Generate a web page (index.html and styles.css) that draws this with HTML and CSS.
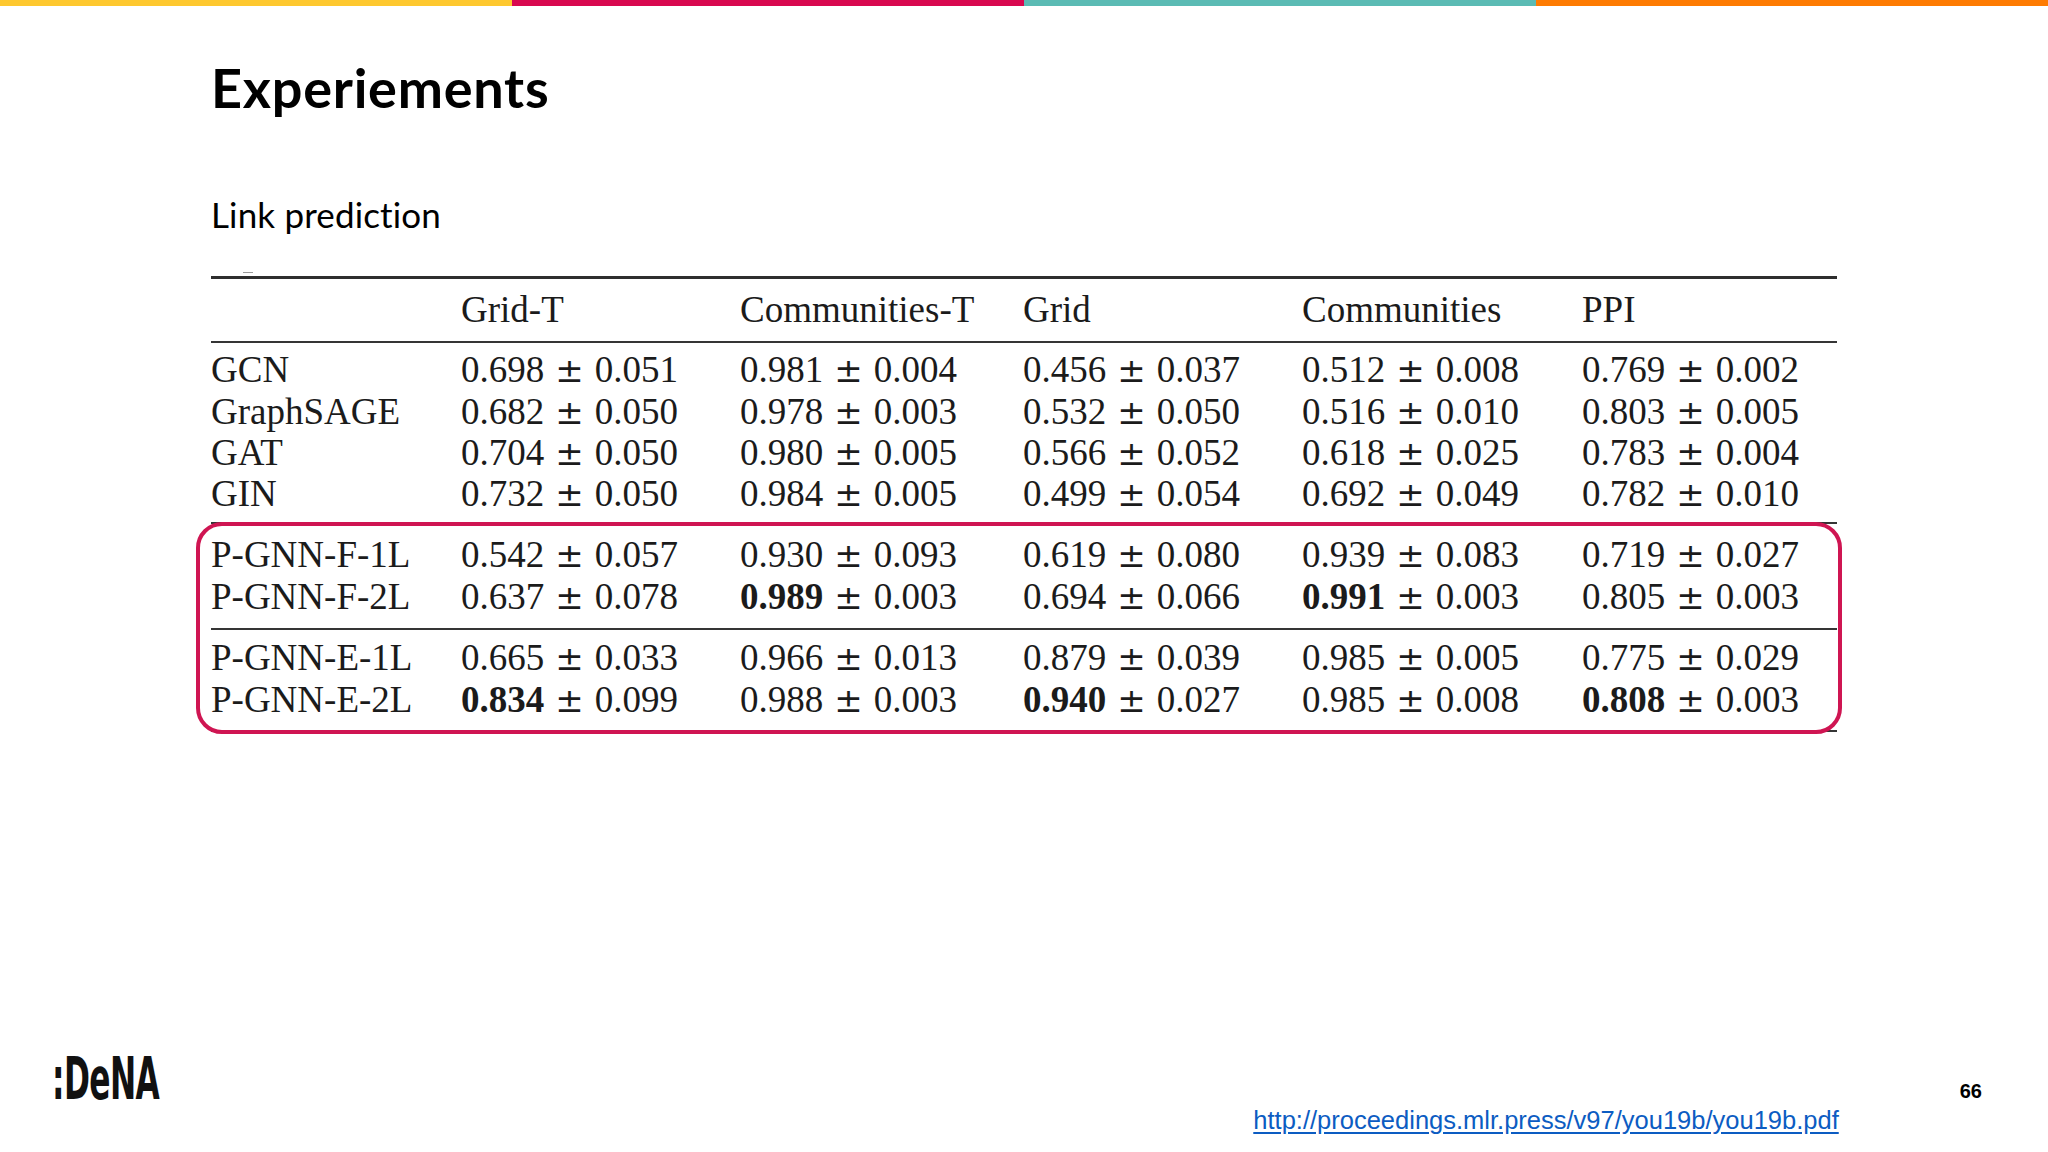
FILE: index.html
```html
<!DOCTYPE html>
<html lang="en">
<head>
<meta charset="utf-8">
<title>Experiements</title>
<link rel="stylesheet" href="styles.css">
</head>
<body>
<div class="slide">
  <div class="topbar">
    <div class="seg yellow"></div>
    <div class="seg crimson"></div>
    <div class="seg teal"></div>
    <div class="seg orange"></div>
  </div>

  <main class="content">
    <h1 class="title">Experiements</h1>
    <p class="subtitle">Link prediction</p>

    <div class="results">
      <div class="rule thick"></div>
      <div class="row head">
        <span></span><span>Grid-T</span><span>Communities-T</span><span>Grid</span><span>Communities</span><span>PPI</span>
      </div>
      <div class="rule"></div>
      <div class="group g1">
        <div class="row"><span class="lbl">GCN</span><span>0.698<i>±</i>0.051</span><span>0.981<i>±</i>0.004</span><span>0.456<i>±</i>0.037</span><span>0.512<i>±</i>0.008</span><span>0.769<i>±</i>0.002</span></div>
        <div class="row"><span class="lbl">GraphSAGE</span><span>0.682<i>±</i>0.050</span><span>0.978<i>±</i>0.003</span><span>0.532<i>±</i>0.050</span><span>0.516<i>±</i>0.010</span><span>0.803<i>±</i>0.005</span></div>
        <div class="row"><span class="lbl">GAT</span><span>0.704<i>±</i>0.050</span><span>0.980<i>±</i>0.005</span><span>0.566<i>±</i>0.052</span><span>0.618<i>±</i>0.025</span><span>0.783<i>±</i>0.004</span></div>
        <div class="row"><span class="lbl">GIN</span><span>0.732<i>±</i>0.050</span><span>0.984<i>±</i>0.005</span><span>0.499<i>±</i>0.054</span><span>0.692<i>±</i>0.049</span><span>0.782<i>±</i>0.010</span></div>
      </div>
      <div class="rule"></div>
      <div class="group g2">
        <div class="row"><span class="lbl">P-GNN-F-1L</span><span>0.542<i>±</i>0.057</span><span>0.930<i>±</i>0.093</span><span>0.619<i>±</i>0.080</span><span>0.939<i>±</i>0.083</span><span>0.719<i>±</i>0.027</span></div>
        <div class="row"><span class="lbl">P-GNN-F-2L</span><span>0.637<i>±</i>0.078</span><span><b>0.989</b><i>±</i>0.003</span><span>0.694<i>±</i>0.066</span><span><b>0.991</b><i>±</i>0.003</span><span>0.805<i>±</i>0.003</span></div>
      </div>
      <div class="rule"></div>
      <div class="group g3">
        <div class="row"><span class="lbl">P-GNN-E-1L</span><span>0.665<i>±</i>0.033</span><span>0.966<i>±</i>0.013</span><span>0.879<i>±</i>0.039</span><span>0.985<i>±</i>0.005</span><span>0.775<i>±</i>0.029</span></div>
        <div class="row"><span class="lbl">P-GNN-E-2L</span><span><b>0.834</b><i>±</i>0.099</span><span>0.988<i>±</i>0.003</span><span><b>0.940</b><i>±</i>0.027</span><span>0.985<i>±</i>0.008</span><span><b>0.808</b><i>±</i>0.003</span></div>
      </div>
      <div class="rule"></div>
      <div class="highlight"></div>
    </div>
  </main>

  <footer class="footer">
    <div class="logo"><span class="logo-text">:DeNA</span></div>
    <a class="ref" href="http://proceedings.mlr.press/v97/you19b/you19b.pdf">http://proceedings.mlr.press/v97/you19b/you19b.pdf</a>
    <div class="pagenum">66</div>
  </footer>
</div>
</body>
</html>
```

FILE: styles.css
```css
html, body {
  margin: 0;
  padding: 0;
  background: #ffffff;
}

.slide {
  width: 2048px;
  height: 1152px;
  overflow: hidden;
  display: flex;
  flex-direction: column;
  background: #ffffff;
  color: #000000;
}

.topbar {
  display: flex;
  height: 6px;
  flex: 0 0 6px;
}
.seg { flex: 1 1 0; }
.yellow { background: #fec82f; }
.crimson { background: #d8084f; }
.teal { background: #5bbbb4; }
.orange { background: #fe7b02; }

.content {
  padding-left: 211px;
  padding-right: 211px;
}

.title {
  margin: 50px 0 0 0;
  font-family: Lato, "Open Sans", sans-serif;
  font-weight: 700;
  font-size: 54px;
  line-height: 64px;
  letter-spacing: 0.75px;
}

.subtitle {
  margin: 74px 0 0 0;
  font-family: Lato, "Open Sans", sans-serif;
  font-weight: 400;
  font-size: 35px;
  line-height: 40px;
  letter-spacing: 0.15px;
}

.results {
  position: relative;
  width: 1626px;
  margin-top: 42px;
  font-family: "Liberation Serif", "Times New Roman", serif;
  font-size: 37px;
  color: #1b1b1b;
}
.results::before {
  content: "";
  position: absolute;
  left: 32px;
  top: -4px;
  width: 10px;
  height: 1px;
  background: #9a9a9a;
}

.rule {
  height: 2px;
  background: #353535;
}
.rule.thick {
  height: 3px;
  background: #2e2e2e;
}

.row {
  display: grid;
  grid-template-columns: 250px 279px 283px 279px 280px 1fr;
  height: 41.3px;
  line-height: 41.3px;
  white-space: nowrap;
}
.row span { display: block; }
.row i {
  font-family: "DejaVu Serif", "Liberation Serif", serif;
  font-style: normal;
  font-size: 34px;
  margin: 0 11px;
}
.row b { font-weight: 700; }

.row.head {
  box-sizing: content-box;
  padding: 10px 0 10.7px 0;
}

.group.g1 { padding: 6.5px 0 7.3px 0; }
.group.g2 { padding: 10.3px 0 11.4px 0; }
.group.g3 { padding: 7px 0 10.6px 0; }

.highlight {
  position: absolute;
  left: -15px;
  top: 246px;
  width: 1646px;
  height: 212px;
  box-sizing: border-box;
  border: 4px solid #cf1552;
  border-radius: 26px;
  pointer-events: none;
}

.footer {
  margin-top: auto;
  display: flex;
  align-items: flex-end;
  padding: 0 66px 0 52px;
}

.logo {
  width: 120px;
  margin-bottom: 44px;
  height: 58px;
  overflow: visible;
}
.logo-text {
  display: inline-block;
  font-family: "Liberation Sans Narrow", "DejaVu Sans Condensed", "Liberation Sans", sans-serif;
  font-weight: 700;
  font-size: 58px;
  line-height: 58px;
  letter-spacing: -1px;
  transform: scaleX(0.6);
  transform-origin: left center;
  color: #111111;
}

.ref {
  margin-left: auto;
  margin-bottom: 17px;
  font-family: "Liberation Sans", Arial, sans-serif;
  font-size: 25.5px;
  line-height: 30px;
  color: #0c5cc2;
  text-decoration: underline;
  text-underline-offset: 3px;
}

.pagenum {
  margin-left: 121px;
  margin-bottom: 49px;
  font-family: "Liberation Sans", Arial, sans-serif;
  font-weight: 700;
  font-size: 20px;
  line-height: 24px;
  color: #000000;
}
```
